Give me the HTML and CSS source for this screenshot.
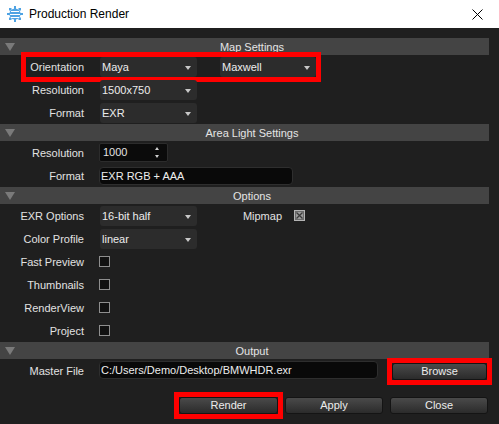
FILE: index.html
```html
<!DOCTYPE html>
<html>
<head>
<meta charset="utf-8">
<title>Production Render</title>
<link rel="stylesheet" href="styles.css">
</head>
<body>
<div class="window">
  <div class="titlebar">
    <svg class="app-icon" width="16" height="16" viewBox="0 0 16 16">
      <g fill="#4fa3e3">
        <rect x="7" y="0" width="2" height="3"/>
        <rect x="7" y="13" width="2" height="3"/>
        <rect x="0" y="7" width="3" height="2"/>
        <rect x="13" y="7" width="3" height="2"/>
        <rect x="2" y="2" width="2.5" height="2.5"/>
        <rect x="11.5" y="2" width="2.5" height="2.5"/>
        <rect x="2" y="11.5" width="2.5" height="2.5"/>
        <rect x="11.5" y="11.5" width="2.5" height="2.5"/>
        <circle cx="8" cy="8" r="5.6"/>
      </g>
      <g stroke="#ffffff" stroke-width="1">
        <line x1="4" y1="5.5" x2="12" y2="5.5"/>
        <line x1="3" y1="8.5" x2="13" y2="8.5"/>
        <line x1="4" y1="11.5" x2="12" y2="11.5"/>
      </g>
    </svg>
    <span class="title">Production Render</span>
    <svg class="close" width="11" height="11" viewBox="0 0 11 11">
      <path d="M0.5 0.5 L10.5 10.5 M10.5 0.5 L0.5 10.5" stroke="#000" stroke-width="1" fill="none"/>
    </svg>
  </div>

  <div class="content">
    <div class="section">
      <div class="header"><span class="tri"></span><span class="htext">Map Settings</span></div>
      <div class="body">
        <div class="row">
          <div class="hl">
            <span class="lbl lbl-short">Orientation</span>
            <div class="combo">Maya</div>
            <div class="combo combo-b">Maxwell</div>
          </div>
        </div>
        <div class="row">
          <span class="lbl">Resolution</span>
          <div class="combo">1500x750</div>
        </div>
        <div class="row">
          <span class="lbl">Format</span>
          <div class="combo">EXR</div>
        </div>
      </div>
    </div>

    <div class="section">
      <div class="header"><span class="tri"></span><span class="htext">Area Light Settings</span></div>
      <div class="body">
        <div class="row">
          <span class="lbl">Resolution</span>
          <div class="spin">1000<span class="spin-arrows"><span class="up"></span><span class="down"></span></span></div>
        </div>
        <div class="row">
          <span class="lbl">Format</span>
          <div class="edit edit-format">EXR RGB + AAA</div>
        </div>
      </div>
    </div>

    <div class="section">
      <div class="header"><span class="tri"></span><span class="htext">Options</span></div>
      <div class="body">
        <div class="row">
          <span class="lbl">EXR Options</span>
          <div class="combo">16-bit half</div>
          <span class="lbl2">Mipmap</span>
          <svg class="checked" width="11" height="11" viewBox="0 0 11 11">
            <rect x="0.5" y="0.5" width="10" height="10" fill="#6a6a6a" stroke="#b4b4b4"/>
            <rect x="2" y="2" width="7" height="7" fill="#9a9a9a"/>
            <path d="M2.5 2.5 L8.5 8.5 M8.5 2.5 L2.5 8.5" stroke="#3a3a3a" stroke-width="1.3"/>
          </svg>
        </div>
        <div class="row">
          <span class="lbl">Color Profile</span>
          <div class="combo">linear</div>
        </div>
        <div class="row">
          <span class="lbl">Fast Preview</span>
          <span class="check"></span>
        </div>
        <div class="row">
          <span class="lbl">Thumbnails</span>
          <span class="check"></span>
        </div>
        <div class="row">
          <span class="lbl">RenderView</span>
          <span class="check"></span>
        </div>
        <div class="row">
          <span class="lbl">Project</span>
          <span class="check"></span>
        </div>
      </div>
    </div>

    <div class="section">
      <div class="header"><span class="tri"></span><span class="htext">Output</span></div>
      <div class="body">
        <div class="row">
          <span class="lbl">Master File</span>
          <div class="edit edit-master">C:/Users/Demo/Desktop/BMWHDR.exr</div>
          <span class="mark mark-browse"><button class="btn btn-browse">Browse</button></span>
        </div>
      </div>
    </div>

    <div class="actions">
      <span class="mark"><button class="btn btn-render">Render</button></span>
      <button class="btn btn-apply">Apply</button>
      <button class="btn btn-close">Close</button>
    </div>
  </div>
</div>
</body>
</html>
```

FILE: styles.css
```css
* { box-sizing: border-box; }

html, body {
  margin: 0;
  padding: 0;
  background: #1f1f1f;
}

body {
  font-family: "Liberation Sans", Arial, sans-serif;
  font-size: 11px;
  color: #e2e2e2;
  width: 499px;
  height: 424px;
  overflow: hidden;
}

.titlebar {
  height: 28px;
  background: #ffffff;
  display: flex;
  align-items: center;
  padding-left: 7px;
}

.app-icon { display: block; flex: none; }

.title {
  margin-left: 6px;
  font-size: 12px;
  color: #000;
  flex: 1;
}

.close {
  display: block;
  margin-right: 16px;
}

.content {
  width: 489px;
  padding-top: 10px;
}

.header {
  height: 17px;
  background: #444444;
  display: flex;
  align-items: center;
}

.tri {
  flex: none;
  width: 0;
  height: 0;
  margin-left: 5px;
  border-left: 5px solid transparent;
  border-right: 5px solid transparent;
  border-top: 8px solid #7a7a7a;
}

.htext {
  flex: 1;
  text-align: center;
  color: #e4e4e4;
}

.row {
  height: 23px;
  display: flex;
  align-items: center;
}

.lbl {
  flex: none;
  width: 84px;
  margin-right: 15px;
  text-align: right;
}

.hl {
  display: flex;
  align-items: center;
  margin-left: 26px;
  height: 20px;
  box-shadow: 0 0 0 5px #ff0000;
}

.lbl-short { width: 58px; }

.combo {
  position: relative;
  flex: none;
  width: 97px;
  height: 20px;
  margin-left: 1px;
  padding-left: 2px;
  line-height: 20px;
  background: #2c2c2c;
  border-radius: 3px;
  color: #ececec;
}

.combo::after {
  content: "";
  position: absolute;
  right: 6px;
  top: 9px;
  border-left: 3px solid transparent;
  border-right: 3px solid transparent;
  border-top: 4px solid #c8c8c8;
}

.combo-b {
  width: 96px;
  margin-left: 23px;
}

.spin {
  position: relative;
  width: 69px;
  height: 19px;
  padding-left: 3px;
  line-height: 17px;
  background: #0b0b0b;
  border: 1px solid #2c2c2c;
  border-radius: 2px;
  margin-top: -1px;
}

.spin-arrows .up,
.spin-arrows .down {
  position: absolute;
  right: 8px;
  width: 0;
  height: 0;
  border-left: 2px solid transparent;
  border-right: 2px solid transparent;
}

.spin-arrows .up { top: 3px; border-bottom: 3px solid #d0d0d0; }
.spin-arrows .down { bottom: 3px; border-top: 3px solid #d0d0d0; }

.edit {
  height: 18px;
  line-height: 16px;
  padding-left: 1px;
  background: #090909;
  border: 1px solid #2e2e2e;
  border-radius: 4px;
  color: #ededed;
  white-space: nowrap;
}

.edit-format { width: 194px; }
.edit-master { width: 279px; margin-top: -2px; }

.lbl2 {
  flex: none;
  width: 85px;
  text-align: right;
  margin-right: 12px;
}

.checked { display: block; flex: none; }

.check {
  flex: none;
  width: 11px;
  height: 11px;
  border: 1px solid #8e8e8e;
  background: #111111;
}

.mark {
  display: flex;
  flex: none;
  box-shadow: 0 0 0 5px #ff0000;
}

.mark-browse { margin-left: 14px; margin-top: 1px; }

.btn {
  display: block;
  font-family: "Liberation Sans", Arial, sans-serif;
  font-size: 11px;
  color: #ececec;
  height: 17px;
  padding: 0;
  line-height: 15px;
  border: 1px solid #141414;
  border-radius: 3px;
  background: linear-gradient(#4a4a4a, #2b2b2b);
}

.btn-browse { width: 95px; }

.actions {
  display: flex;
  justify-content: flex-end;
  gap: 7px;
  padding-top: 15px;
  padding-right: 1px;
}

.btn-render { width: 99px; }
.btn-apply { width: 98px; }
.btn-close { width: 98px; }
```
